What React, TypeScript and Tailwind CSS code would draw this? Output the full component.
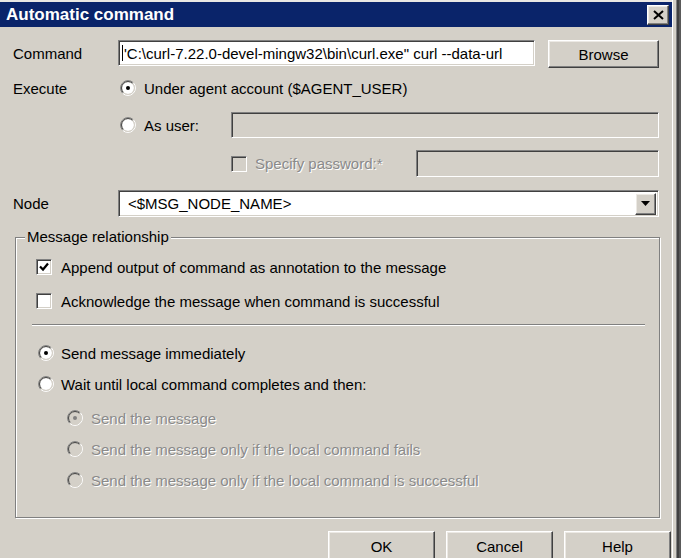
import React from "react";

const sunken =
  "border border-t-[#808080] border-l-[#808080] border-b-white border-r-white shadow-[inset_1px_1px_0_#404040,inset_-1px_-1px_0_#d4d0c8]";
const raised =
  "border border-t-white border-l-white border-b-[#404040] border-r-[#404040] shadow-[inset_-1px_-1px_0_#808080,inset_1px_1px_0_#ece9e4]";
const grayText = "text-[#8a8a8a] [text-shadow:1px_1px_0_#ffffff]";

function Radio({ checked, disabled }: { checked?: boolean; disabled?: boolean }) {
  return (
    <svg width="16" height="16" viewBox="0 0 16 16" className="shrink-0">
      <circle cx="8" cy="8" r="6" fill={disabled ? "#d4d0c8" : "#ffffff"} />
      <path d="M2.697 13.303A7.5 7.5 0 0 1 13.303 2.697" stroke="#808080" fill="none" />
      <path d="M13.303 2.697A7.5 7.5 0 0 1 2.697 13.303" stroke="#ffffff" fill="none" />
      <path d="M3.404 12.596A6.5 6.5 0 0 1 12.596 3.404" stroke="#404040" fill="none" />
      <path d="M12.596 3.404A6.5 6.5 0 0 1 3.404 12.596" stroke="#d4d0c8" fill="none" />
      {checked && <circle cx="8" cy="8" r="2" fill={disabled ? "#808080" : "#000000"} />}
    </svg>
  );
}

function Checkbox({ checked, disabled }: { checked?: boolean; disabled?: boolean }) {
  return (
    <span
      className={`flex items-center justify-center w-[16px] h-[16px] shrink-0 ${sunken} ${
        disabled ? "bg-[#d4d0c8]" : "bg-white"
      }`}
    >
      {checked && (
        <svg width="10" height="10" viewBox="0 0 10 10">
          <path d="M1 4.5 L4 7.5 L9 1.5" stroke="#000" strokeWidth="2.2" fill="none" />
        </svg>
      )}
    </span>
  );
}

function Button({ label, className }: { label: string; className: string }) {
  return (
    <div className={`flex items-center justify-center bg-[#d4d0c8] shrink-0 ${raised} ${className}`}>
      {label}
    </div>
  );
}

export default function App() {
  return (
    <div className="w-[681px] h-[558px] overflow-hidden bg-[#d4d0c8] flex font-['Liberation_Sans',Arial,sans-serif] text-[15px] text-black leading-none">
      <div className="w-[672px] flex flex-col">
        <div className="h-[2px] shrink-0 bg-[#e9e7e3]" />

        {/* Title bar */}
        <div className="h-[25px] shrink-0 bg-[#0a246a] flex items-center justify-between pl-[6px] pr-[3px]">
          <span className="text-white font-bold text-[17px]">Automatic command</span>
          <div className={`w-[22px] h-[20px] bg-[#d4d0c8] flex items-center justify-center ${raised}`}>
            <svg width="11" height="10" viewBox="0 0 11 10">
              <path d="M1 1 L10 9 M10 1 L1 9" stroke="#000" strokeWidth="2" />
            </svg>
          </div>
        </div>

        <div className="flex flex-col shrink-0 pl-[13px]">
          {/* Command */}
          <div className="flex items-start mt-[13px] h-[28px]">
            <span className="w-[105px] h-[26px] flex items-center">Command</span>
            <div
              className={`w-[417px] h-[26px] bg-white flex items-center pl-[3px] overflow-hidden whitespace-nowrap ${sunken}`}
            >
              <span className="w-[1px] h-[16px] bg-black mr-[1px] shrink-0" />
              <span>'C:\curl-7.22.0-devel-mingw32\bin\curl.exe" curl --data-url</span>
            </div>
            <Button label="Browse" className="ml-[13px] w-[111px] h-[28px]" />
          </div>

          {/* Execute */}
          <div className="flex items-center mt-[7px] h-[26px]">
            <span className="w-[105px]">Execute</span>
            <div className="flex items-center gap-[8px] pl-[2px]">
              <Radio checked />
              <span>Under agent account ($AGENT_USER)</span>
            </div>
          </div>

          {/* As user */}
          <div className="flex items-center mt-[11px] h-[26px]">
            <span className="w-[105px]" />
            <div className="w-[113px] flex items-center gap-[8px] pl-[2px]">
              <Radio />
              <span>As user:</span>
            </div>
            <div className={`w-[428px] h-[26px] bg-[#d4d0c8] ${sunken}`} />
          </div>

          {/* Specify password */}
          <div className="flex items-center mt-[12px] h-[27px]">
            <span className="w-[218px]" />
            <div className="w-[185px] flex items-center gap-[8px]">
              <Checkbox disabled />
              <span className={grayText}>Specify password:*</span>
            </div>
            <div className={`w-[243px] h-[27px] bg-[#d4d0c8] ${sunken}`} />
          </div>

          {/* Node */}
          <div className="flex items-center mt-[13px] h-[27px]">
            <span className="w-[105px]">Node</span>
            <div className={`w-[541px] h-[27px] bg-white flex items-center justify-between pl-[9px] pr-[2px] ${sunken}`}>
              <span>&lt;$MSG_NODE_NAME&gt;</span>
              <div className={`w-[21px] h-[22px] bg-[#d4d0c8] flex items-center justify-center ${raised}`}>
                <svg width="9" height="5" viewBox="0 0 9 5">
                  <path d="M0 0 H9 L4.5 5 Z" fill="#000" />
                </svg>
              </div>
            </div>
          </div>

          {/* Message relationship */}
          <fieldset className="mt-[12px] ml-[2px] w-[645px] border border-[#808080] shadow-[1px_1px_0_#ffffff,inset_1px_1px_0_#ffffff] pb-[25px]">
            <legend className="ml-[9px] px-[2px] h-[16px] leading-[16px] bg-[#d4d0c8]">Message relationship</legend>

            <div className="flex items-center h-[24px] mt-[10px] pl-[20px] gap-[9px]">
              <Checkbox checked />
              <span>Append output of command as annotation to the message</span>
            </div>
            <div className="flex items-center h-[24px] mt-[10px] pl-[20px] gap-[9px]">
              <Checkbox />
              <span>Acknowledge the message when command is successful</span>
            </div>

            <div className="mt-[11px] ml-[16px] w-[613px] h-[2px] border-t border-t-[#808080] border-b border-b-white" />

            <div className="flex items-center h-[24px] mt-[15px] pl-[22px] gap-[7px]">
              <Radio checked />
              <span>Send message immediately</span>
            </div>
            <div className="flex items-center h-[24px] mt-[7px] pl-[22px] gap-[7px]">
              <Radio />
              <span>Wait until local command completes and then:</span>
            </div>

            <div className="flex items-center h-[24px] mt-[10px] pl-[51px] gap-[8px]">
              <Radio checked disabled />
              <span className={grayText}>Send the message</span>
            </div>
            <div className="flex items-center h-[24px] mt-[7px] pl-[51px] gap-[8px]">
              <Radio disabled />
              <span className={grayText}>Send the message only if the local command fails</span>
            </div>
            <div className="flex items-center h-[24px] mt-[7px] pl-[51px] gap-[8px]">
              <Radio disabled />
              <span className={grayText}>Send the message only if the local command is successful</span>
            </div>
          </fieldset>

          {/* Buttons */}
          <div className="flex justify-end gap-[11px] mt-[13px] pr-[1px]">
            <Button label="OK" className="w-[107px] h-[30px]" />
            <Button label="Cancel" className="w-[107px] h-[30px]" />
            <Button label="Help" className="w-[107px] h-[30px]" />
          </div>
        </div>
      </div>

      {/* Window frame, right edge */}
      <div className="flex-1 flex">
        <div className="w-[1px] bg-white" />
        <div className="w-[3px] bg-[#d4d0c8]" />
        <div className="w-[1px] bg-[#808080]" />
        <div className="w-[2px] bg-[#404040]" />
        <div className="flex-1 bg-[#5a5a5a]" />
      </div>
    </div>
  );
}
